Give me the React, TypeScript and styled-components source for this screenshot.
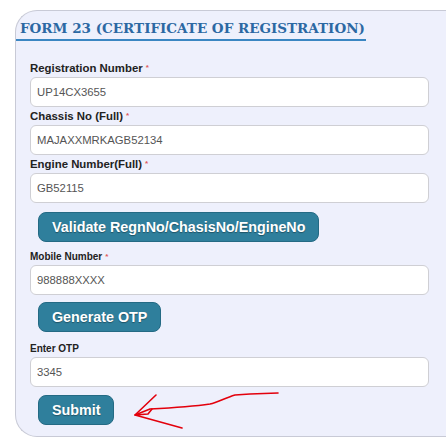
import { createGlobalStyle, styled } from "styled-components";

const GlobalStyle = createGlobalStyle`
  html, body {
    margin: 0;
    padding: 0;
    background: #fff;
    overflow: hidden;
  }
  body {
    font-family: "Liberation Sans", Arial, sans-serif;
  }
`;

const fields = [
  { label: "Registration Number", value: "UP14CX3655", required: true },
  { label: "Chassis No (Full)", value: "MAJAXXMRKAGB52134", required: true },
  { label: "Engine Number(Full)", value: "GB52115", required: true },
];

const App = () => {
  return (
    <Page>
      <GlobalStyle />
      <Panel>
        <Title>FORM 23 (CERTIFICATE OF REGISTRATION)</Title>
        <Form>
          {fields.map((f) => (
            <div key={f.label}>
              <Label>
                {f.label}
                {f.required && <Star>*</Star>}
              </Label>
              <Input readOnly value={f.value} />
            </div>
          ))}
          <Button $top={9}>Validate RegnNo/ChasisNo/EngineNo</Button>
          <Label $small $top={6}>
            Mobile Number<Star>*</Star>
          </Label>
          <Input readOnly value="988888XXXX" />
          <Button $top={7}>Generate OTP</Button>
          <Label $small $top={8}>
            Enter OTP
          </Label>
          <Input readOnly value="3345" />
          <SubmitRow>
            <Button $top={0}>Submit</Button>
            <Arrow width="160" height="44" viewBox="0 0 160 44">
              <path
                d="M148 3 L120 4 L105 5 C95 8 88 12 80 14 C60 17 40 18 20 19 L5 25"
                fill="none"
                stroke="#e3000c"
                strokeWidth="1.6"
                strokeLinecap="round"
                strokeLinejoin="round"
              />
              <path
                d="M26 5 L5 25 L52 38 M5 25 L18 24 L22 19"
                fill="none"
                stroke="#e3000c"
                strokeWidth="1.6"
                strokeLinecap="round"
                strokeLinejoin="round"
              />
            </Arrow>
          </SubmitRow>
        </Form>
      </Panel>
    </Page>
  );
};

export default App;

const Page = styled.div`
  padding: 10px 0 0 15px;
`;

const Panel = styled.div`
  background: #eef0fc;
  border: 1px solid #c8cad6;
  border-right: none;
  border-radius: 22px 0 0 22px;
  padding-bottom: 11px;
`;

const Title = styled.h2`
  margin: 0;
  width: 346px;
  padding: 9px 0 3px 4px;
  font-family: Georgia, "DejaVu Serif", "Liberation Serif", serif;
  font-size: 13.5px;
  font-weight: bold;
  line-height: 16px;
  color: #2c68a3;
  border-bottom: 2px solid #3a86c2;
`;

const Form = styled.div`
  display: flex;
  flex-direction: column;
  align-items: flex-start;
  padding: 18px 0 0 14px;
`;

const Label = styled.label<{ $small?: boolean; $top?: number }>`
  display: block;
  margin-top: ${(p) => p.$top ?? 0}px;
  font-size: ${(p) => (p.$small ? "10px" : "11.4px")};
  font-weight: bold;
  line-height: ${(p) => (p.$small ? "17px" : "18px")};
  color: #222;
`;

const Star = styled.span`
  color: #e05a5a;
  font-size: 8px;
  margin-left: 3px;
  vertical-align: top;
`;

const Input = styled.input`
  box-sizing: border-box;
  display: block;
  width: 399px;
  height: 30px;
  padding: 0 6px;
  background: #fff;
  border: 1px solid #cfcfd4;
  border-radius: 6px;
  font-family: "Liberation Sans", Arial, sans-serif;
  font-size: 11.3px;
  color: #555;
  outline: none;
`;

const Button = styled.button<{ $top: number }>`
  margin: ${(p) => p.$top}px 0 0 8px;
  height: 30px;
  padding: 0 13px;
  background: #2f7f9c;
  border: 1px solid #246a84;
  border-radius: 8px;
  font-family: "Liberation Sans", Arial, sans-serif;
  font-size: 14.3px;
  font-weight: bold;
  color: #fff;
  text-shadow: 0 1px 1px rgba(0, 0, 0, 0.35);
  cursor: pointer;
`;

const SubmitRow = styled.div`
  position: relative;
  margin-top: 8px;
`;

const Arrow = styled.svg`
  position: absolute;
  left: 100px;
  top: -5px;
`;
